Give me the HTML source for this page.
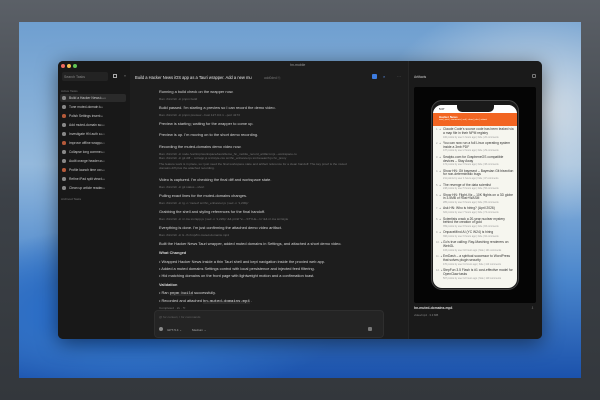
<!DOCTYPE html><html><head><meta charset="utf-8"><style>
*{margin:0;padding:0;box-sizing:border-box}
body{width:600px;height:400px;overflow:hidden;background:linear-gradient(180deg,#5b6067,#3c4147 50%,#33373c);font-family:"Liberation Sans",sans-serif;position:relative}
.a{position:absolute;white-space:nowrap}
#wall{position:absolute;left:19px;top:22px;width:562px;height:356px;background:radial-gradient(ellipse 55% 35% at 20% 82%,#1d6ad8 0%,#2f6fc4 35%,transparent 70%),radial-gradient(ellipse 40% 45% at 92% 25%,#d5dee6 0%,transparent 70%),linear-gradient(180deg,#6f9fd0 0%,#94b9dc 40%,#4a86cc 72%,#1b52ac 100%)}
#win{position:absolute;left:58px;top:61px;width:484px;height:278px;background:#1d1d1d;border-radius:5px;overflow:hidden;box-shadow:0 4px 20px rgba(0,0,0,.5)}
#side{position:absolute;left:0;top:0;width:72px;height:278px;background:#181818}
#art{position:absolute;left:350px;top:0;width:134px;height:278px;background:#1a1a1a;border-left:1px solid #262626}
.t{font-size:3.9px;color:#d6d6d6}
.c{font-size:3.1px;color:#777}
.dot{position:absolute;width:4px;height:4px;border-radius:50%}
.hn{font-size:3.3px;color:#333;line-height:3.8px}
.hs{font-size:2.4px;color:#999;line-height:3.1px}
</style></head><body>
<div id="wall"></div>
<div id="win">
 <div id="side"></div>
 <div id="art"></div>
 <div class="dot" style="left:3px;top:3px;background:#ed6a5e"></div>
 <div class="dot" style="left:9px;top:3px;background:#f5bf4f"></div>
 <div class="dot" style="left:15px;top:3px;background:#61c554"></div>
 <div class="a" style="left:232px;top:2px;font-size:3.5px;color:#999">hn-mobile</div>
 <div class="a" style="left:4px;top:11px;width:46px;height:9px;background:#232323;border-radius:2px"></div>
 <div class="a" style="left:6px;top:13.5px;font-size:3.5px;color:#888">Search Tasks</div>
 <div class="a" style="left:55px;top:13px;width:4px;height:4px;border:0.6px solid #aaa"></div>
 <div class="a" style="left:66px;top:13px;font-size:3.5px;color:#888">«</div>
 <div class="a" style="left:3px;top:27.5px;font-size:3px;color:#777">Active Tasks</div>
 <div class="a" style="left:2px;top:33px;width:66px;height:8px;background:#2a2a2a;border-radius:2px"></div>
 <div id="tasks"></div>
 <div class="a" style="left:3px;top:135.5px;font-size:3px;color:#777">Archived Tasks</div>
 <div class="a" style="left:77px;top:13.5px;font-size:4.1px;color:#e6e6e6">Build a Hacker News iOS app as a Tauri wrapper. Add a new mu</div>
 <div class="a" style="left:206px;top:14.5px;font-size:3.3px;color:#777">add0ded ⎘</div>
 <div class="a" style="left:314px;top:13px;width:5px;height:5px;background:#3d7ce0;border-radius:1px"></div>
 <div class="a" style="left:325px;top:12.5px;font-size:4px;color:#5a8fe8">⌕</div>
 <div class="a" style="left:339px;top:12px;font-size:4px;color:#888">…</div>
 <div class="a" style="left:356px;top:14px;font-size:3.4px;color:#ccc">Artifacts</div>
 <div class="a" style="left:474px;top:13px;width:4px;height:4px;border:0.5px solid #777;border-radius:1px"></div>
 <div id="chat"></div>
 <div class="a" style="left:96px;top:249px;width:230px;height:28px;background:#242424;border-radius:4px;border:0.5px solid #2e2e2e"></div>
 <div class="a" style="left:101px;top:254px;font-size:3.1px;color:#666">@ for context, / for commands</div>
 <div class="a" style="left:101px;top:266px;width:4px;height:4px;border-radius:50%;background:#888"></div>
 <div class="a" style="left:109px;top:266.5px;font-size:3.1px;color:#aaa">GPT-5.4 ⌄</div>
 <div class="a" style="left:134px;top:266.5px;font-size:3.1px;color:#aaa">Medium ⌄</div>
 <div class="a" style="left:310px;top:266px;width:4px;height:4px;background:#777;border-radius:1px"></div>
 <div class="a" style="left:356px;top:26px;width:122px;height:216px;background:#050505;border-radius:2px"></div>
 <div class="a" style="left:373px;top:39px;width:88px;height:190px;background:#1a1a1a;border-radius:11px;border:1.5px solid #444"></div>
 <div class="a" style="left:375px;top:44px;width:84px;height:183px;background:#f6f6ef;border-radius:9px;overflow:hidden">
  <div style="height:8px;background:#fff;position:relative"><span style="position:absolute;left:6px;top:2px;font-size:2.8px">5:07</span></div>
  <div style="position:absolute;left:24px;top:-1px;width:37px;height:8px;background:#1a1a1a;border-radius:0 0 5px 5px"></div>
  <div style="height:13px;background:#f26522;padding:2px 0 0 6px;font-size:3px;color:#fff;font-weight:bold">Hacker News<div style="font-size:2.2px;font-weight:normal;color:#ffe">new | past | comments | ask | show | jobs | submit</div></div>
  <div id="hn" style="padding:2px 3px 0 10px"></div>
 </div>
 <div class="a" style="left:356px;top:245px;font-size:3.4px;color:#ddd;font-weight:bold">hn-muted-domains.mp4</div>
 <div class="a" style="left:356px;top:251.5px;font-size:2.8px;color:#888">video/mp4 · 3.3 MB</div>
 <div class="a" style="left:473px;top:245px;font-size:3.4px;color:#888">⇩</div>
</div>
<script>
var T=[["Build a Hacker News i...","Now"],["Tune muted-domain t...","4m"],["Polish Settings insert...","7m"],["Add muted-domain su...","10m"],["Investigate HN auth c...","14m"],["Improve offline wrapp...","16m"],["Collapse long comme...","23m"],["Audit orange header c...","28m"],["Profile launch time on ...","36m"],["Refine iPad split view l...","41m"],["Clean up article reader...","54m"]];
var h="";T.forEach(function(t,i){var y=34.5+i*9;h+='<div class="a" style="left:4px;top:'+(y+0.5)+'px;width:3.5px;height:3.5px;border-radius:50%;background:'+(i%3==2?'#b55a3a':'#888')+'"></div><div class="a" style="left:11px;top:'+y+'px;font-size:3.3px;color:#ccc">'+t[0]+'</div><div class="a" style="left:'+(i==0?42:41)+'px;top:'+y+'px;font-size:3px;color:#777">'+t[1]+'</div>';});
document.getElementById("tasks").innerHTML=h;
var L=[[28,"t","Running a build check on the wrapper now."],[36,"c","Ran  ./bin/zsh -lc pnpm build"],[44,"t","Build passed. I'm starting a preview so I can record the demo video."],[52,"c","Ran  ./bin/zsh -lc pnpm preview --host 127.0.0.1 --port 4173"],[60,"t","Preview is starting; waiting for the wrapper to come up."],[71,"t","Preview is up. I'm moving on to the short demo recording."],[83,"t","Recording the muted-domains demo video now."],[91,"c","Ran  ./bin/zsh -lc node /var/tmp/workspace/tauri/demo_hn_mobile_record_artifact.mjs --workspace-ro"],[95,"c","Ran  ./bin/zsh -lc git diff -- src/app.js src/style.css src/hn_enhancer.js src/research.js hn_proxy"],[101,"c","The feature work is in place, so I just need the final workspace state and artifact reference for a clean handoff. The key proof is the muted"],[105,"c","domains diff plus the attached recording."],[116,"t","Video is captured. I'm checking the final diff and workspace state."],[124,"c","Ran  ./bin/zsh -lc git status --short"],[132,"t","Pulling exact lines for the muted-domains changes."],[140,"c","Ran  ./bin/zsh -lc rg -n 'muted' src/hn_enhancer.js | sed -n '1,200p'"],[148,"t","Grabbing the shell and styling references for the final handoff."],[156,"c","Ran  ./bin/zsh -lc nl -ba src/app.js | sed -n '1,220p' && printf '\\n---STYLE---\\n' && nl -ba src/style"],[164,"t","Everything is done. I'm just confirming the attached demo video artifact."],[172,"c","Ran  ./bin/zsh -lc ls -lh /tmp/hn-muted-domains.mp4"],[180,"t","Built the Hacker News Tauri wrapper, added muted domains in Settings, and attached a short demo video."],[189,"t","<b>What Changed</b>"],[198,"t","•  Wrapped Hacker News inside a thin Tauri shell and kept navigation inside the proxied web app."],[205,"t","•  Added a muted domains Settings control with local persistence and injected feed filtering."],[212,"t","•  Hid matching domains on the front page with lightweight motion and a confirmation toast."],[221,"t","<b>Validation</b>"],[229,"t","•  Ran  <span style='font-family:Liberation Mono;background:#2a2a2a'>pnpm build</span>  successfully."],[237,"t","•  Recorded and attached  <span style='font-family:Liberation Mono;background:#2a2a2a'>hn-muted-domains.mp4</span> ."],[245,"c","Completed · 2s · ⟲"]];
h="";L.forEach(function(l){h+='<div class="a '+l[1]+'" style="left:101px;top:'+l[0]+'px">'+l[2]+'</div>';});
document.getElementById("chat").innerHTML=h;
var N=["Claude Code's source code has been leaked via a map file in their NPM registry","You can now run a full Linux operating system inside a 3mb PDF","Sealpto.com for GrapheneOS compatible devices – Stay Away","Show HN: Git bayesect – Bayesian Git bisection for non-deterministic bugs","The revenge of the data scientist","Show HN: Flight-Viz – 10K flights on a 3D globe in 3.5MB of Rust+WASM","Ask HN: Who is hiring? (April 2026)","Scientists crack a 20-year nuclear mystery behind the creation of gold","OnpaceMind AI (YC W24) is hiring","Go's true calling: Ray-Marching renderers on WebGL","EmDash – a spiritual successor to WordPress that solves plugin security","StepFun 3.5 Flash is #1 cost-effective model for OpenClaw tasks"];
h="";N.forEach(function(n,i){h+='<div style="margin-bottom:3.2px;position:relative"><span style="position:absolute;left:-7px;font-size:2.6px;color:#999">'+(i+1)+'. ▲</span><div class="hn" style="white-space:normal">'+n+'</div><div class="hs">'+(100+i*37)+' points by user '+(i+1)+' hours ago | hide | '+(20+i*9)+' comments</div></div>';});
document.getElementById("hn").innerHTML=h;
</script>
</body></html>
